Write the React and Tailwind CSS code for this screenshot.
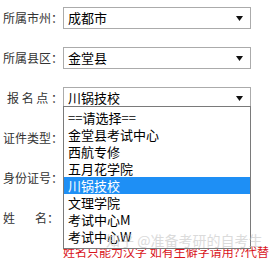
const font = "font-['Microsoft_YaHei','Noto_Sans_CJK_SC',sans-serif]";

function Arrow() {
  return (
    <svg width="7" height="5" viewBox="0 0 7 5" className="shrink-0">
      <path d="M0 0 H7 L3.5 5 Z" fill="#111" />
    </svg>
  );
}

function Select({ value }) {
  return (
    <div className="w-[188px] h-[22px] border border-[#ababab] bg-white flex items-center justify-between pl-[4px] pr-[7px] text-[13px] text-black">
      <span>{value}</span>
      <Arrow />
    </div>
  );
}

function Label({ children, className = "" }) {
  return (
    <div className={"w-[60px] h-[22px] flex items-center text-[12px] text-[#333] " + className}>
      {children}
    </div>
  );
}

const options = [
  "==请选择==",
  "金堂县考试中心",
  "西航专修",
  "五月花学院",
  "川锅技校",
  "文理学院",
  "考试中心M",
  "考试中心W",
];

export default function App() {
  return (
    <div className={"relative w-[277px] h-[263px] overflow-hidden bg-white pl-[3px] pt-[7px] " + font}>
      <div className="flex items-center mb-[18px]">
        <Label>所属市州：</Label>
        <Select value="成都市" />
      </div>
      <div className="flex items-center mb-[18px]">
        <Label>所属县区：</Label>
        <Select value="金堂县" />
      </div>
      <div className="flex items-center mb-[18px]">
        <Label className="justify-between pl-[4px]">
          <span>报</span>
          <span>名</span>
          <span>点</span>
          <span>：</span>
        </Label>
        <Select value="川锅技校" />
      </div>
      <div className="flex items-center mb-[18px]">
        <Label>证件类型：</Label>
      </div>
      <div className="flex items-center mb-[18px]">
        <Label>身份证号：</Label>
      </div>
      <div className="flex items-center">
        <Label>
          <span>姓</span>
          <span className="ml-[20px]">名：</span>
        </Label>
      </div>
      <div className="mt-[16px] pl-[60px] text-[12px] leading-[14px] text-[#d9141b] whitespace-nowrap">
        姓名只能为汉字 如有生僻字请用??代替
      </div>

      <div className="absolute left-[63px] top-[106px] w-[188px] border border-[#7a7a7a] bg-white pt-[2px] pb-[3px] text-[13px] text-black">
        {options.map((o) => (
          <div
            key={o}
            className={
              "h-[17px] leading-[17px] pl-[4px] " +
              (o === "川锅技校" ? "bg-[#1e8ff5] text-white" : "")
            }
          >
            {o}
          </div>
        ))}
      </div>

      <div className="absolute left-[106px] top-[232px] text-[14px] leading-[16px] text-[#c4c4c4] opacity-60 whitespace-nowrap">
        知乎 @准备考研的自考生
      </div>
    </div>
  );
}
